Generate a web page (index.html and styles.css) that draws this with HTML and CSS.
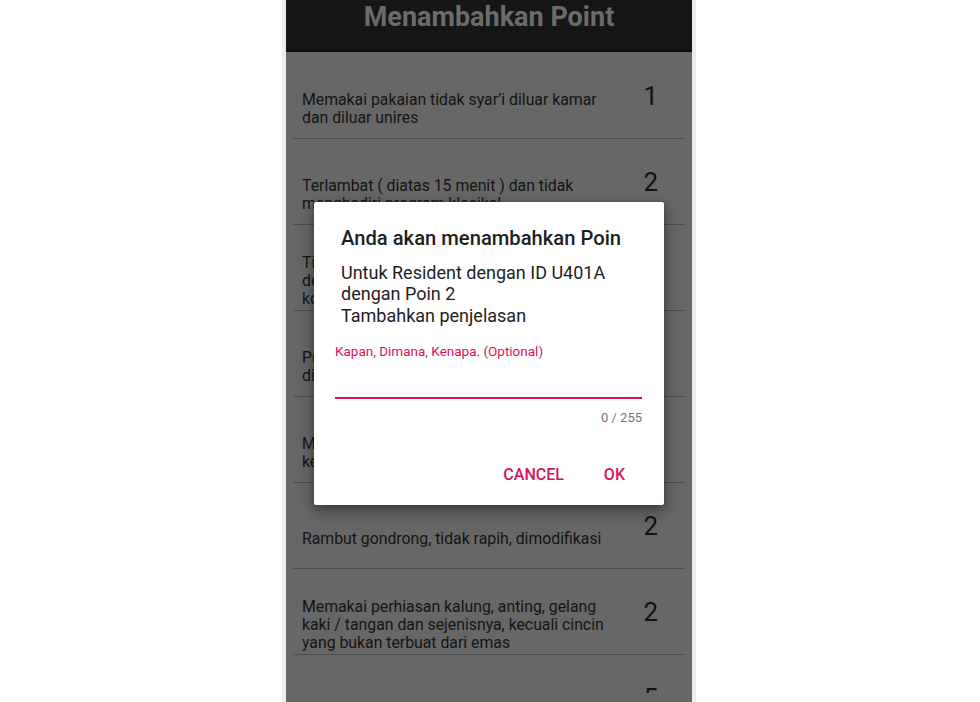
FILE: index.html
```html
<!DOCTYPE html>
<html lang="id">
<head>
<meta charset="utf-8">
<title>Menambahkan Point</title>
<link rel="stylesheet" href="styles.css">
</head>
<body>
<div class="phone">
  <div class="screen">
    <header class="appbar">Menambahkan Point</header>
    <div class="viewport">
      <ul class="list">
        <li class="row"><span class="desc">Memakai pakaian tidak syar’i diluar kamar<br>dan diluar unires</span><span class="num">1</span></li>
        <li class="row"><span class="desc">Terlambat ( diatas 15 menit ) dan tidak<br>menghadiri program klasikal</span><span class="num">2</span></li>
        <li class="row"><span class="desc">Tidak mengikuti kegiatan asrama<br>dengan alasan yang tidak jelas dan<br>konfirmasi kepada pengurus</span><span class="num">2</span></li>
        <li class="row"><span class="desc">Pulang terlambat tanpa izin dan<br>diluar jam yang ditentukan</span><span class="num">2</span></li>
        <li class="row"><span class="desc">Membawa barang elektronik tanpa<br>keterangan yang jelas</span><span class="num">2</span></li>
        <li class="row"><span class="desc">Rambut gondrong, tidak rapih, dimodifikasi</span><span class="num">2</span></li>
        <li class="row"><span class="desc">Memakai perhiasan kalung, anting, gelang<br>kaki / tangan dan sejenisnya, kecuali cincin<br>yang bukan terbuat dari emas</span><span class="num">2</span></li>
        <li class="row"><span class="desc">Merokok di lingkungan asrama</span><span class="num">5</span></li>
      </ul>
    </div>
    <div class="dialog">
      <h2 class="dialog-title">Anda akan menambahkan Poin</h2>
      <p class="dialog-msg">Untuk Resident dengan ID U401A<br>dengan Poin 2<br>Tambahkan penjelasan</p>
      <div class="field">
        <label class="field-hint">Kapan, Dimana, Kenapa. (Optional)</label>
        <div class="field-line"></div>
        <div class="field-count">0 / 255</div>
      </div>
      <div class="actions">
        <button class="btn">CANCEL</button>
        <button class="btn">OK</button>
      </div>
    </div>
  </div>
</div>
</body>
</html>
```

FILE: styles.css
```css
html, body {
  margin: 0;
  padding: 0;
  background: #ffffff;
  height: 702px;
  overflow: hidden;
}
body {
  display: flex;
  justify-content: center;
  font-family: Roboto, "Noto Sans", Arial, sans-serif;
}
.phone {
  width: 406px;
  height: 702px;
  margin-right: 2px;
  border-left: 4px solid #ececec;
  border-right: 4px solid #ececec;
}
.screen {
  position: relative;
  height: 702px;
  background: #676767;
  overflow: hidden;
}
.appbar {
  height: 50px;
  background: #161616;
  border-bottom: 2px solid #0c0c0c;
  color: #6b6b6b;
  font-size: 27px;
  font-weight: 700;
  text-align: center;
  line-height: 34px;
}
.viewport {
  height: 641px;
  overflow: hidden;
}
.list {
  list-style: none;
  margin: 0;
  padding: 1px 7px 0;
}
.row {
  box-sizing: border-box;
  height: 86px;
  border-bottom: 1px solid #4d4d4d;
  display: flex;
  align-items: center;
  justify-content: space-between;
}
.desc {
  padding: 26px 0 0 9px;
  font-size: 15.8px;
  line-height: 18px;
  color: #141414;
}
.num {
  font-size: 26px;
  color: #121212;
  padding-right: 27px;
}
.dialog {
  position: absolute;
  left: 28px;
  top: 202px;
  width: 350px;
  height: 303px;
  box-sizing: border-box;
  background: #ffffff;
  border-radius: 2px;
  box-shadow: 0 6px 18px rgba(0,0,0,0.35), 0 2px 6px rgba(0,0,0,0.25);
  padding: 24px 22px 0 27px;
}
.dialog-title {
  margin: 0;
  font-size: 20.2px;
  font-weight: 500;
  color: #1e1e1e;
  line-height: 25px;
}
.dialog-msg {
  margin: 11px 0 0;
  font-size: 18px;
  line-height: 21.3px;
  color: #1e1e1e;
}
.field {
  margin: 17px 0 0 -6px;
}
.field-hint {
  display: block;
  font-size: 13.5px;
  line-height: 16px;
  color: #d6135c;
}
.field-line {
  height: 2px;
  background: #d6135c;
  margin-top: 38px;
}
.field-count {
  text-align: right;
  font-size: 13px;
  color: #757575;
  margin-top: 11px;
  line-height: 16px;
}
.actions {
  display: flex;
  justify-content: flex-end;
  gap: 40px;
  margin-top: 40px;
  padding-right: 17px;
}
.btn {
  border: none;
  background: none;
  padding: 0;
  font-family: inherit;
  font-size: 16px;
  font-weight: 500;
  color: #d6135c;
  line-height: 18px;
}
```
